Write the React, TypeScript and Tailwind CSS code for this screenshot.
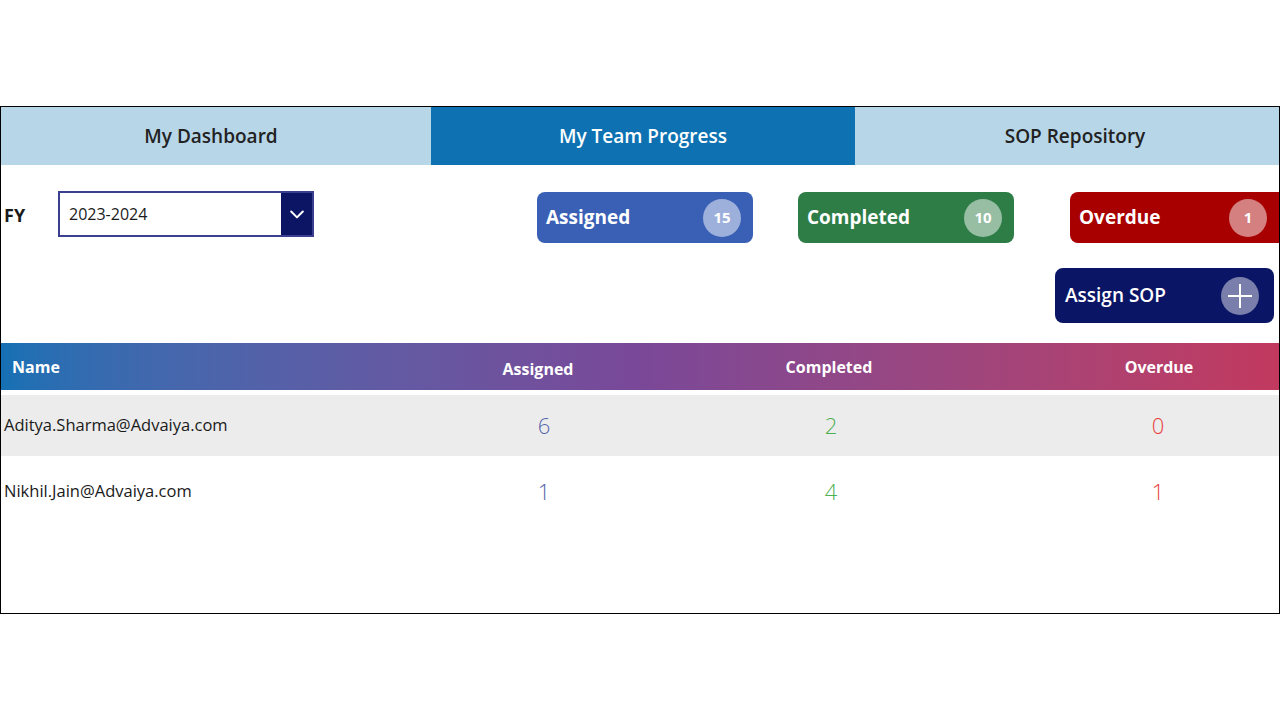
import React from "react";

const font = { fontFamily: '"Open Sans", "Noto Sans", sans-serif' };

function Card({ label, count, bg, extra }: { label: string; count: string; bg: string; extra: string }) {
  return (
    <div className={`flex h-[51px] shrink-0 items-center justify-between rounded-lg pl-[9px] pr-[12px] ${bg} ${extra}`}>
      <span className="text-[19px] font-bold text-white">{label}</span>
      <span className="flex h-[38px] w-[38px] items-center justify-center rounded-full bg-white/50 text-[15px] font-bold text-white">
        {count}
      </span>
    </div>
  );
}

export default function App() {
  const rows = [
    { name: "Aditya.Sharma@Advaiya.com", a: "6", c: "2", o: "0", bg: "bg-[#ececec]", h: "h-[61px]" },
    { name: "Nikhil.Jain@Advaiya.com", a: "1", c: "4", o: "1", bg: "bg-white", h: "h-[70px]" },
  ];
  return (
    <div className="h-[720px] w-[1280px] bg-white pt-[106px]" style={font}>
      <div className="flex h-[508px] w-[1280px] flex-col overflow-hidden border border-black">
        {/* Tabs */}
        <div className="flex h-[58px] shrink-0">
          <div className="flex w-[430px] items-center justify-center bg-[#b7d6e8] pr-[10px] text-[19px] font-semibold text-[#222]">
            My Dashboard
          </div>
          <div className="flex w-[424px] items-center justify-center bg-[#0e72b2] text-[19px] font-semibold text-white">
            My Team Progress
          </div>
          <div className="flex flex-1 items-center justify-center bg-[#b7d6e8] pl-[16px] text-[19px] font-semibold text-[#222]">
            SOP Repository
          </div>
        </div>

        {/* Filters & cards */}
        <div className="flex h-[178px] shrink-0 flex-col">
          <div className="mt-[26px] flex items-start">
            <span className="ml-[3px] mt-[11px] w-[54px] shrink-0 text-[18px] font-bold text-[#1a1a1a]">FY</span>
            <div className="flex h-[46px] w-[256px] shrink-0 items-stretch border-2 border-[#3b3f8f] bg-white">
              <span className="flex flex-1 items-center pl-[9px] text-[16px] text-[#1a1a1a]">2023-2024</span>
              <span className="flex w-[31px] items-center justify-center bg-[#0c1563]">
                <svg width="20" height="20" viewBox="0 0 24 24" fill="none" stroke="white" strokeWidth="2.4" strokeLinecap="round" strokeLinejoin="round">
                  <path d="M5 9l7 7 7-7" />
                </svg>
              </span>
            </div>
            <Card label="Assigned" count="15" bg="bg-[#3a60b6]" extra="ml-[223px] mt-[1px] w-[216px]" />
            <Card label="Completed" count="10" bg="bg-[#2e7d47]" extra="ml-[45px] mt-[1px] w-[216px]" />
            <Card label="Overdue" count="1" bg="bg-[#a80000]" extra="ml-[56px] mt-[1px] w-[209px] rounded-r-none" />
          </div>
          <div className="mt-[25px] flex justify-end pr-[5px]">
            <div className="flex h-[55px] w-[219px] items-center justify-between rounded-lg bg-[#0b1566] pl-[10px] pr-[15px]">
              <span className="text-[19px] font-semibold text-white">Assign SOP</span>
              <span className="flex h-[38px] w-[38px] items-center justify-center rounded-full bg-white/45">
                <svg width="28" height="28" viewBox="0 0 28 28" stroke="white" strokeWidth="2">
                  <path d="M14 2v24M2 14h24" />
                </svg>
              </span>
            </div>
          </div>
        </div>

        {/* Table header */}
        <div className="flex h-[47px] shrink-0 items-center bg-gradient-to-r from-[#1570b4] via-[#7a4898] to-[#c2395f] text-[16px] font-bold text-white">
          <div className="w-[430px] pl-[11px]">Name</div>
          <div className="mt-[4px] w-[214px] text-center">Assigned</div>
          <div className="w-[368px] text-center">Completed</div>
          <div className="flex-1 pl-[26px] text-center">Overdue</div>
        </div>
        <div className="h-[5px] shrink-0" />
        {rows.map((r) => (
          <div key={r.name} className={`flex shrink-0 items-center ${r.h} ${r.bg}`}>
            <div className="w-[436px] pl-[3px] text-[16.5px] text-[#1a1a1a]">{r.name}</div>
            <div className="w-[214px] text-center text-[22px] font-light text-[#5566aa]">{r.a}</div>
            <div className="w-[360px] text-center text-[22px] font-light text-[#4caf50]">{r.c}</div>
            <div className="flex-1 pl-[26px] text-center text-[22px] font-light text-[#e8413b]">{r.o}</div>
          </div>
        ))}
      </div>
    </div>
  );
}
